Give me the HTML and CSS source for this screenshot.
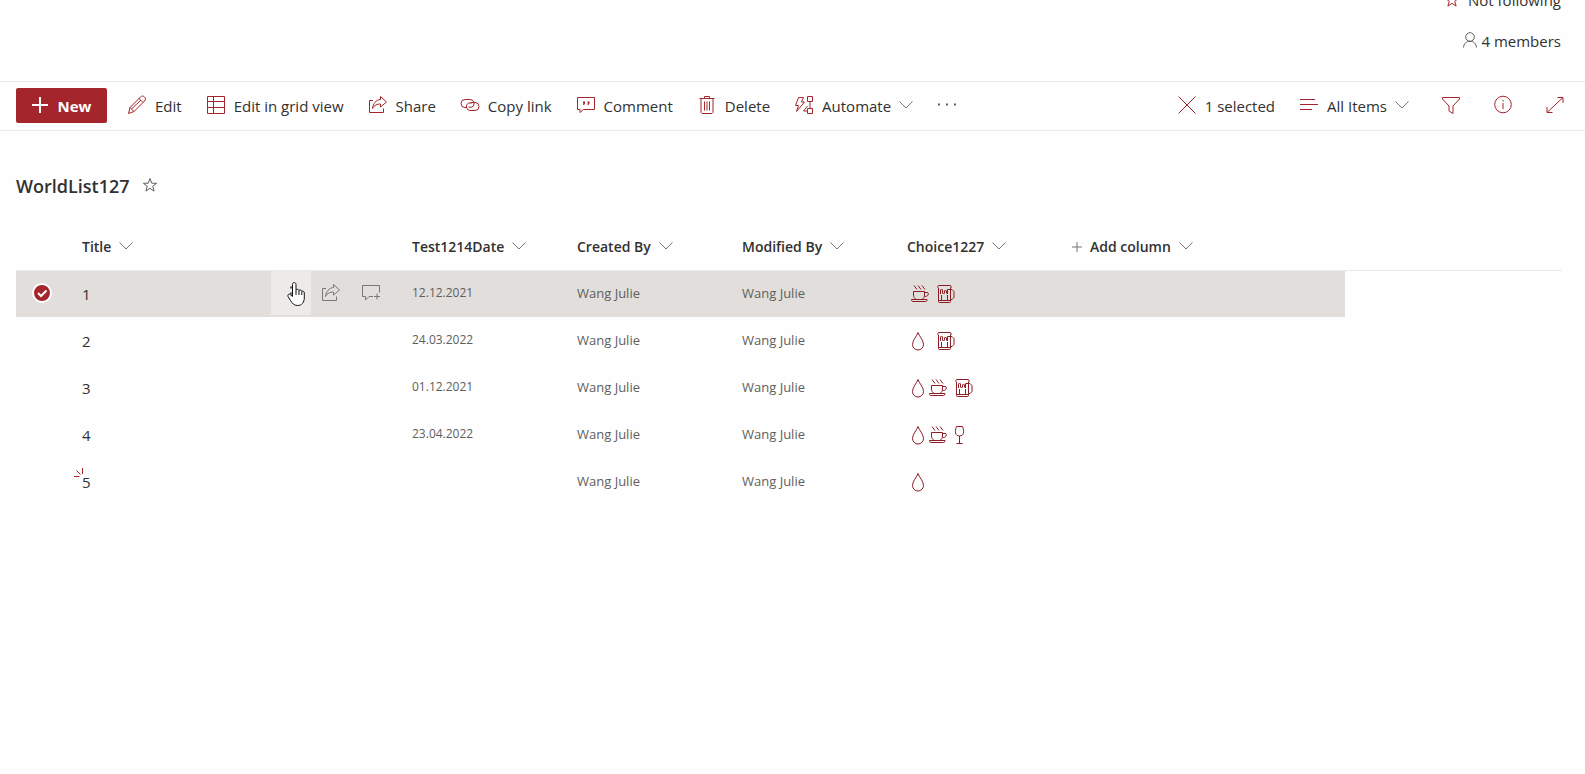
FILE: index.html
```html
<!DOCTYPE html>
<html lang="en">
<head>
  <meta charset="utf-8">
  <title>WorldList127</title>
  <link rel="stylesheet" href="styles.css">
</head>
<body>
  <!-- Shared icons -->
  <svg class="icon-defs" aria-hidden="true">
    <symbol id="chevron" viewBox="0 0 14 8"><path d="M0.5 0.5 7 7l6.5-6.5"/></symbol>
    <symbol id="share" viewBox="0 0 20 20"><path d="M5 5.5H1.500V17.500H15.500V13.500M12.500 1.500 18.500 7l-6 5V9C9 9 6.500 10 4.500 13.500 5 8.500 8 5 12.500 4.500z"/></symbol>
    <symbol id="drop" viewBox="0 0 18 20"><path d="M7 1.500C6 5 1.500 9 1.500 13.500a5.500 5.500 0 0 0 11 0C12.500 9 8 5 7 1.500z"/></symbol>
    <symbol id="coffee" viewBox="0 0 18 20"><path d="M2.500 7.500h11v3.500c0 2-1 3.500-2.500 4.500H5c-1.500-1-2.500-2.500-2.500-4.500zM13.500 8.500H16c1.500 0 1.500 1 1 2.500-.5 1-1.500 1.500-3.500 1.500M.5 15.500h15.500c0 1.500-.5 2-1.500 2H2c-1 0-1.500-.5-1.500-2zM3 1.500l3 4M7 1.500l3 4M11 1.500l3 4"/></symbol>
    <symbol id="beer" viewBox="0 0 18 20"><path d="M1.500 4.500C.5 3.500.5 1.500 2 1.500h11c1.500 0 1.500 2 .5 3M1.500 4v13.500c0 1 .5 1 1 1H12c1 0 1.500 0 1.500-1V3.500M13.500 5.500H15l2 2v6l-2 2h-1.500M2 16.500h11M3.500 10V6l1-1 1 1v3l1 1 1-1V7l1-1 1 1v2l1 1V5.500h2.500M4.500 11v5M10.500 11v5"/></symbol>
    <symbol id="wine" viewBox="0 0 12 20"><path d="M2.500 1.500h6c2 5 1.500 9.500-3 9.500s-5-4.500-3-9.500zM5.500 11v7.500M2.500 18.500h6"/></symbol>
  </svg>

  <header class="site-header">
    <button class="site-link" type="button">
      <svg class="icon-star" viewBox="0 0 16 16"><path d="m8 1.500 1.700 4.700 4.900.1-3.900 3 1.400 4.800L8 11.300l-4.100 2.800 1.400-4.800-3.900-3 4.900-.1z"/></svg>
      Not following
    </button>
    <button class="site-link members" type="button">
      <svg class="icon-person" viewBox="0 0 14 16"><circle cx="7" cy="5" r="4.300"/><path d="M.5 15.500C.8 11.500 3.500 9.300 7 9.300s6.200 2.200 6.500 6.200"/></svg>
      4 members
    </button>
  </header>

  <div class="command-bar" role="toolbar" aria-label="List commands">
    <div class="commands">
      <button class="new-button" type="button">
        <svg class="icon-add" viewBox="0 0 16 16"><path d="M8 0v16M0 8h16"/></svg>
        New
      </button>
      <button class="command" type="button">
        <svg class="icon" viewBox="0 0 20 20"><path d="m1.500 18.500 1.500-6L13.500 2C15 .5 16.500 1 17.500 2s1.500 2.500 0 4L7 16.500zM12 3.500l4 4M3 12.500 7 16.500M4.500 14l9.500-9"/></svg>
        Edit
      </button>
      <button class="command" type="button">
        <svg class="icon" viewBox="0 0 20 20"><path d="M1.500 1.500h17v17h-17zM1.500 6.500h17M1.500 12.500h17M7.500 1.500v17"/></svg>
        Edit in grid view
      </button>
      <button class="command" type="button">
        <svg class="icon"><use href="#share"/></svg>
        Share
      </button>
      <button class="command" type="button">
        <svg class="icon" viewBox="0 0 20 20"><path d="M7 12.500H5a4 4 0 0 1 0-8h5a4 4 0 0 1 1 7.900L8.500 12M10.500 7.500H15a3.800 3.800 0 0 1 0 8h-5a4 4 0 0 1-1.500-7.500l3 .2"/></svg>
        Copy link
      </button>
      <button class="command" type="button">
        <svg class="icon" viewBox="0 0 20 20"><path d="M1.500 2.500h17v12H7.500l-3.500 3v-3H1.500z"/><path class="solid" d="M7 6.500h2v2L8 10H7l.5-1.500H7zM11.500 6.500h2v2l-1 1.500h-1l.5-1.500h-.5z"/></svg>
        Comment
      </button>
      <button class="command" type="button">
        <svg class="icon" viewBox="0 0 20 20"><path d="M2.500 3.500h15M7.500 3.500v-2h5v2M4 3.500v14l1 1h10l1-1v-14M7.500 6.500v9M10 6.500v9M12.500 6.500v9"/></svg>
        Delete
      </button>
      <button class="command" type="button">
        <svg class="icon" viewBox="0 0 20 20"><path d="M4.500 2.500h5L7.500 7h3L2.500 16.500 4.500 10.500H1.500zM13.500 1.500h5v5h-5zM13.500 13.500h5v5h-5zM16 6.500v7M13.500 16h-4l4-5"/></svg>
        Automate
        <svg class="chevron"><use href="#chevron"/></svg>
      </button>
      <button class="command" type="button" aria-label="More">
        <svg class="icon" viewBox="0 0 20 20"><path class="dots" d="M1 9.500h2M9 9.500h2M17 9.500h2"/></svg>
      </button>
    </div>

    <div class="commands">
      <button class="command" type="button">
        <svg class="icon" viewBox="0 0 20 20"><path d="m1.500 1.500 17 17M18.500 1.500l-17 17"/></svg>
        1 selected
      </button>
      <button class="command" type="button">
        <svg class="icon" viewBox="0 0 20 20"><path d="M1 4.500h15M1 9.500h18M1 14.500h12"/></svg>
        All Items
        <svg class="chevron"><use href="#chevron"/></svg>
      </button>
      <button class="command icon-only" type="button" aria-label="Filter">
        <svg class="icon" viewBox="0 0 20 20"><path d="M1.500 2.500h17v1.500L12 11v7.500L8 16v-5L1.500 4z"/></svg>
      </button>
      <button class="command icon-only" type="button" aria-label="Details">
        <svg class="icon" viewBox="0 0 20 20"><circle cx="10" cy="9.500" r="8.300"/><path d="M10 8v6M10 5v1.500"/></svg>
      </button>
      <button class="command icon-only" type="button" aria-label="Expand content">
        <svg class="icon" viewBox="0 0 20 20"><path d="M2 17.500 18 2.500M12.500 2.500H18v5.500M2 12v5.500h5.500"/></svg>
      </button>
    </div>
  </div>

  <main class="list">
    <div class="list-heading">
      <h1 class="list-title">WorldList127</h1>
      <button class="favorite" type="button" aria-label="Favorite">
        <svg class="icon-star" viewBox="0 0 16 16"><path d="m8 1.500 1.700 4.700 4.900.1-3.900 3 1.400 4.800L8 11.300l-4.100 2.800 1.400-4.800-3.900-3 4.900-.1z"/></svg>
      </button>
    </div>

    <table class="items">
      <colgroup>
        <col class="col-check">
        <col class="col-title">
        <col class="col-field">
        <col class="col-field">
        <col class="col-field">
        <col class="col-field">
        <col class="col-add">
        <col>
      </colgroup>
      <thead>
        <tr>
          <th></th>
          <th><button class="column-button" type="button">Title <svg class="chevron"><use href="#chevron"/></svg></button></th>
          <th><button class="column-button" type="button">Test1214Date <svg class="chevron"><use href="#chevron"/></svg></button></th>
          <th><button class="column-button" type="button">Created By <svg class="chevron"><use href="#chevron"/></svg></button></th>
          <th><button class="column-button" type="button">Modified By <svg class="chevron"><use href="#chevron"/></svg></button></th>
          <th><button class="column-button" type="button">Choice1227 <svg class="chevron"><use href="#chevron"/></svg></button></th>
          <th><button class="column-button" type="button"><svg class="icon-plus" viewBox="0 0 10 10"><path d="M5 0v10M0 5h10"/></svg>Add column <svg class="chevron"><use href="#chevron"/></svg></button></th>
          <th></th>
        </tr>
      </thead>
      <tbody>
        <tr class="selected">
          <td class="check-cell">
            <label class="row-check">
              <input class="row-check-input" type="checkbox" aria-label="Select item 1" checked>
              <svg class="row-check-mark" viewBox="0 0 20 20"><circle cx="10" cy="10" r="9"/><path d="m6 10 3 3 5.500-5.500"/></svg>
            </label>
          </td>
          <td>
            <div class="title-cell">
              <a class="item-link" href="#">1</a>
              <div class="row-actions">
                <button class="row-action hovered" type="button" aria-label="Show actions">
                  <svg class="icon" viewBox="0 0 20 20"><path class="dots" d="M9 4.500h2M9 10.500h2M9 16.500h2"/></svg>
                  <svg class="pointer" viewBox="0 0 18 24"><path d="M5.500 14.500V2.500C5.500 0 9 0 9 2.500V8c.5-1 2.500-1 3 .5.7-1 2.500-.7 2.800.8 1-.5 2.500 0 2.500 1.700V16c0 4-2.500 7.500-6.500 7.500S5.500 21.500 3.500 18.500L1 14.500C.3 12.500 2 11.500 3.200 12.500zM9 8v5M12 8.500V13M14.800 9.500V13"/></svg>
                </button>
                <button class="row-action" type="button" aria-label="Share">
                  <svg class="icon"><use href="#share"/></svg>
                </button>
                <button class="row-action" type="button" aria-label="Add comment">
                  <svg class="icon" viewBox="0 0 20 20"><path d="M12 13.500H8l-3.500 3.500v-3.500h-3v-11h17v7M16 10.500v6M13 13.500h6"/></svg>
                </button>
              </div>
            </div>
          </td>
          <td class="date">12.12.2021</td>
          <td>Wang Julie</td>
          <td>Wang Julie</td>
          <td><div class="choices"><svg class="choice"><use href="#coffee"/></svg><svg class="choice choice-glass"><use href="#beer"/></svg></div></td>
          <td></td>
          <td></td>
        </tr>
        <tr>
          <td></td>
          <td><a class="item-link" href="#">2</a></td>
          <td class="date">24.03.2022</td>
          <td>Wang Julie</td>
          <td>Wang Julie</td>
          <td><div class="choices"><svg class="choice"><use href="#drop"/></svg><svg class="choice choice-glass"><use href="#beer"/></svg></div></td>
          <td></td>
          <td></td>
        </tr>
        <tr>
          <td></td>
          <td><a class="item-link" href="#">3</a></td>
          <td class="date">01.12.2021</td>
          <td>Wang Julie</td>
          <td>Wang Julie</td>
          <td><div class="choices"><svg class="choice"><use href="#drop"/></svg><svg class="choice"><use href="#coffee"/></svg><svg class="choice choice-glass"><use href="#beer"/></svg></div></td>
          <td></td>
          <td></td>
        </tr>
        <tr>
          <td></td>
          <td><a class="item-link" href="#">4</a></td>
          <td class="date">23.04.2022</td>
          <td>Wang Julie</td>
          <td>Wang Julie</td>
          <td><div class="choices"><svg class="choice"><use href="#drop"/></svg><svg class="choice"><use href="#coffee"/></svg><svg class="choice choice-wine"><use href="#wine"/></svg></div></td>
          <td></td>
          <td></td>
        </tr>
        <tr>
          <td></td>
          <td>
            <a class="item-link" href="#">5
              <svg class="new-mark" viewBox="0 0 10 10"><path d="M8.500 0v6M2.500 2.500l4 4M0 8.500h5.500"/></svg>
            </a>
          </td>
          <td class="date"></td>
          <td>Wang Julie</td>
          <td>Wang Julie</td>
          <td><div class="choices"><svg class="choice"><use href="#drop"/></svg></div></td>
          <td></td>
          <td></td>
        </tr>
      </tbody>
    </table>
  </main>
</body>
</html>
```
FILE: styles.css
```css
* {
  box-sizing: border-box;
  margin: 0;
  padding: 0;
}

body {
  font-family: "Segoe UI", "Open Sans", "Noto Sans", sans-serif;
  font-size: 15px;
  line-height: 20px;
  color: #323130;
  background: #fefefe;
}

button {
  font: inherit;
  color: inherit;
  background: none;
  border: none;
  cursor: pointer;
}

a {
  color: inherit;
  text-decoration: none;
}

svg {
  flex: none;
  fill: none;
  stroke: #a4262c;
}

.icon-defs {
  display: none;
}

.icon {
  width: 20px;
  height: 20px;
}

.icon-star {
  width: 16px;
  height: 16px;
}

.chevron {
  width: 14px;
  height: 8px;
  margin-bottom: 2px;
  stroke: #797775;
}

.dots {
  stroke: #605e5c;
  stroke-width: 2;
}

.solid {
  fill: #a4262c;
  stroke: none;
}

/* Site header */
.site-header {
  display: flex;
  flex-direction: column;
  align-items: flex-end;
  justify-content: flex-end;
  height: 81px;
  padding: 0 24px 20px;
  overflow: hidden;
}

.site-link {
  display: flex;
  flex: none;
  align-items: center;
  gap: 8px;
  height: 41px;
}

.members {
  gap: 4px;
}

.icon-person {
  width: 14px;
  height: 16px;
  margin-bottom: 2px;
  stroke: #605e5c;
}

/* Command bar */
.command-bar {
  display: flex;
  align-items: center;
  justify-content: space-between;
  height: 50px;
  padding: 0 20px 0 16px;
  border-top: 1px solid #eaeaea;
  border-bottom: 1px solid #eaeaea;
}

.commands {
  display: flex;
  align-items: center;
  gap: 24px;
}

.command {
  display: flex;
  align-items: center;
  gap: 8px;
  height: 35px;
}

.command .icon {
  margin-bottom: 2px;
}

.icon-only {
  margin-left: 8px;
}

.new-button {
  display: flex;
  align-items: center;
  justify-content: center;
  gap: 10px;
  width: 91px;
  height: 35px;
  margin-right: -4px;
  margin-bottom: 1px;
  padding-top: 1px;
  font-weight: 700;
  color: #fff;
  background: #a4262c;
  border-radius: 2px;
}

.icon-add {
  width: 16px;
  height: 16px;
  margin-bottom: 2px;
  stroke: #fff;
  stroke-width: 2;
}

/* List */
.list {
  padding: 40px 23px 0 16px;
}

.list-heading {
  display: flex;
  align-items: center;
  gap: 12px;
  height: 30px;
}

.list-title {
  font-size: 18px;
  font-weight: 600;
}

.favorite {
  display: flex;
  margin-bottom: 2px;
}

.favorite .icon-star {
  stroke: #605e5c;
}

.items {
  width: 100%;
  margin-top: 22px;
  table-layout: fixed;
  border-collapse: separate;
  border-spacing: 0;
}

.col-check {
  width: 58px;
}

.col-title {
  width: 330px;
}

.col-field {
  width: 165px;
}

.col-add {
  width: 281px;
}

.items th {
  height: 48px;
  padding: 0 8px;
  text-align: left;
  border-bottom: 1px solid #eaeaea;
}

.column-button {
  display: flex;
  align-items: center;
  gap: 8px;
  font-size: 14px;
  font-weight: 600;
}

.icon-plus {
  width: 10px;
  height: 10px;
  stroke: #797775;
}

.items td {
  height: 47px;
  padding: 0 8px 2px;
  font-size: 13px;
  color: #605e5c;
  border-bottom: 1px solid #fefefe;
}

.items .date {
  font-size: 12px;
}

.selected td {
  background: #e1dedb;
}

.selected td:last-child {
  background: none;
}

.items .check-cell {
  padding: 0 0 2px 16px;
}

.row-check {
  display: block;
  position: relative;
  width: 20px;
  height: 20px;
}

.row-check-input {
  position: absolute;
  width: 20px;
  height: 20px;
  opacity: 0;
}

.row-check-mark {
  display: block;
  width: 20px;
  height: 20px;
  fill: #a4262c;
  stroke: #fff;
  stroke-width: 2;
}

.title-cell {
  display: flex;
  align-items: center;
  justify-content: space-between;
}

.item-link {
  position: relative;
  top: 1px;
  font-size: 15px;
  color: #323130;
}

.row-actions {
  display: flex;
  margin-right: 5px;
}

.row-action {
  display: flex;
  position: relative;
  align-items: center;
  justify-content: center;
  width: 40px;
  height: 44px;
}

.row-action svg {
  stroke: #797775;
}

.hovered {
  background: #edebe9;
}

/* Hand pointer over the hovered action */
.row-action .pointer {
  position: absolute;
  top: 11px;
  left: 16px;
  width: 18px;
  height: 24px;
  fill: #fff;
  stroke: #111;
}

.choices {
  display: flex;
  align-items: center;
  padding: 2px 0 0 4px;
}

.choice {
  width: 18px;
  height: 20px;
  stroke: #8c1d24;
}

.choice-glass {
  margin-left: 8px;
}

.choice-wine {
  width: 12px;
  margin-left: 7px;
}

.new-mark {
  position: absolute;
  top: -4px;
  left: -8px;
  width: 10px;
  height: 10px;
}
```
